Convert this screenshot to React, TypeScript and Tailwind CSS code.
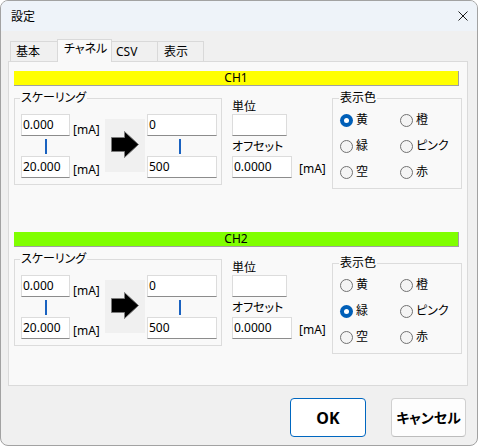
import React from "react";

function Box({ className = "", children }: { className?: string; children?: React.ReactNode }) {
  return (
    <div
      className={
        "h-[22px] bg-white border border-[#dcdcdc] border-b-[#8c8c8c] pl-[1px] flex items-center leading-[14px] text-black " +
        className
      }
    >
      {children}
    </div>
  );
}

function Radio({ label, checked }: { label: string; checked?: boolean }) {
  return (
    <div className="flex items-center h-[26px]">
      {checked ? (
        <span className="w-[13px] h-[13px] rounded-full bg-[#005fb8] flex items-center justify-center">
          <span className="w-[5px] h-[5px] rounded-full bg-white" />
        </span>
      ) : (
        <span className="w-[13px] h-[13px] rounded-full border border-[#727272] bg-[#f4f4f4]" />
      )}
      <span className="ml-[3px] leading-[14px]">{label}</span>
    </div>
  );
}

function Arrow() {
  return (
    <svg width="40" height="53" viewBox="0 0 40 53">
      <polygon
        points="6.5,18.5 19.5,18.5 19.5,12.5 33.5,25.5 19.5,38.5 19.5,32.5 6.5,32.5"
        fill="#000"
        stroke="#7a7a7a"
        strokeWidth="1"
      />
    </svg>
  );
}

function Channel({
  name,
  barClass,
  selected,
  colorTop,
  sectionClass,
  lo,
  hi,
}: {
  name: string;
  barClass: string;
  selected: string;
  colorTop: string;
  sectionClass: string;
  lo: string;
  hi: string;
}) {
  const colors = ["黄", "橙", "緑", "ピンク", "空", "赤"];
  return (
    <div className={sectionClass}>
      <div className={"h-[15px] w-[445px] border-b border-r border-[#a0a0a0] text-center leading-[14px] " + barClass}>
        {name}
      </div>
      <div className="flex items-start">
        {/* scaling group */}
        <div className="relative mt-[12px] w-[208px] border border-[#dcdcdc] pt-[15px] pl-[6px] pb-[6px] flex items-start">
          <span className="absolute left-[5px] -top-[8px] px-[1px] bg-[#f9f9f9] leading-[14px]">スケーリング</span>
          <div className="w-[49px] flex flex-col">
            <Box className="w-[49px]">{lo}</Box>
            <div className="ml-[24px] mt-[3px] w-[2px] h-[15px] bg-[#1a62c0]" />
            <Box className="mt-[2px] w-[49px]">{hi}</Box>
          </div>
          <div className="ml-[3px] w-[29px] flex flex-col">
            <span className="mt-[9px] leading-[14px]">[mA]</span>
            <span className="mt-[26px] leading-[14px]">[mA]</span>
          </div>
          <div className="ml-[3px] mt-[5px] w-[40px] h-[53px] bg-[#f0f0f0]">
            <Arrow />
          </div>
          <div className="ml-[2px] w-[70px] flex flex-col">
            <Box className="w-[70px]">0</Box>
            <div className="ml-[32px] mt-[3px] w-[2px] h-[15px] bg-[#1a62c0]" />
            <Box className="mt-[2px] w-[70px]">500</Box>
          </div>
        </div>
        {/* unit / offset */}
        <div className="ml-[10px] w-[100px] flex flex-col">
          <span className="mt-[14px] leading-[14px]">単位</span>
          <Box className="w-[55px]" />
          <span className="mt-[4px] leading-[14px]">オフセット</span>
          <div className="mt-[2px] flex items-start">
            <Box className="w-[60px]">0.0000</Box>
            <span className="ml-[7px] mt-[6px] leading-[14px]">[mA]</span>
          </div>
        </div>
        {/* colour group */}
        <div className={"relative w-[130px] border border-[#dcdcdc] pt-[8px] pl-[7px] pb-[3px] " + colorTop}>
          <span className="absolute left-[6px] -top-[8px] px-[1px] bg-[#f9f9f9] leading-[14px]">表示色</span>
          <div className="grid grid-cols-[60px_60px]">
            {colors.map((c) => (
              <Radio key={c} label={c} checked={c === selected} />
            ))}
          </div>
        </div>
      </div>
    </div>
  );
}

export default function App() {
  return (
    <div className="w-[479px] h-[446px] bg-white text-[12px] text-black [font-family:'Noto_Sans','Noto_Sans_CJK_JP',sans-serif] [font-feature-settings:'palt']">
      <div className="w-[478px] h-[446px] rounded-[8px] border border-[#a2a2a2] overflow-hidden flex flex-col bg-[#f0f0f0]">
        {/* title bar */}
        <div className="h-[30px] shrink-0 bg-[#eef3f9] flex items-center justify-between pl-[10px] pr-[9px]">
          <span className="leading-[14px] pt-[1px]">設定</span>
          <svg width="10" height="10" viewBox="0 0 10 10">
            <path d="M0.5 0.5 L9.5 9.5 M9.5 0.5 L0.5 9.5" stroke="#1b1b1b" strokeWidth="1" />
          </svg>
        </div>
        {/* body */}
        <div className="flex-1 flex flex-col">
          <div className="mt-[8px] ml-[9px] h-[23px] -mb-[1px] flex items-start">
            <div className="mt-[2px] h-[20px] w-[47px] pl-[5px] pt-[3px] border-t border-l border-[#d9d9d9] leading-[14px]">
              基本
            </div>
            <div className="relative z-10 h-[23px] w-[55px] pl-[6px] pt-[2px] border-t border-l border-r border-[#d9d9d9] bg-[#f9f9f9] leading-[14px]">
              チャネル
            </div>
            <div className="mt-[2px] h-[20px] w-[46px] pl-[4px] pt-[3px] border-t border-r border-[#d9d9d9] leading-[14px]">
              CSV
            </div>
            <div className="mt-[2px] h-[20px] w-[46px] pl-[6px] pt-[3px] border-t border-r border-[#d9d9d9] leading-[14px]">
              表示
            </div>
          </div>
          <div className="ml-[7px] w-[460px] h-[325px] border border-[#dadada] bg-[#f9f9f9] pt-[9px] pl-[5px] overflow-hidden">
            <Channel
              name="CH1"
              barClass="bg-[#ffff00]"
              selected="黄"
              colorTop="mt-[12px]"
              sectionClass=""
              lo="0.000"
              hi="20.000"
            />
            <Channel
              name="CH2"
              barClass="bg-[#80ff00]"
              selected="緑"
              colorTop="mt-[16px]"
              sectionClass="mt-[43px]"
              lo="0.000"
              hi="20.000"
            />
          </div>
          <div className="mt-[12px] pr-[11px] flex justify-end gap-[25px]">
            <button className="w-[76px] h-[39px] rounded-[4px] border border-[#0067c0] bg-white font-bold text-[16px] leading-[20px]">
              OK
            </button>
            <button className="w-[75px] h-[39px] rounded-[4px] border border-[#d0d0d0] border-b-[#bcbcbc] bg-[#fdfdfd] font-bold text-[14px] leading-[18px]">
              キャンセル
            </button>
          </div>
        </div>
      </div>
    </div>
  );
}
